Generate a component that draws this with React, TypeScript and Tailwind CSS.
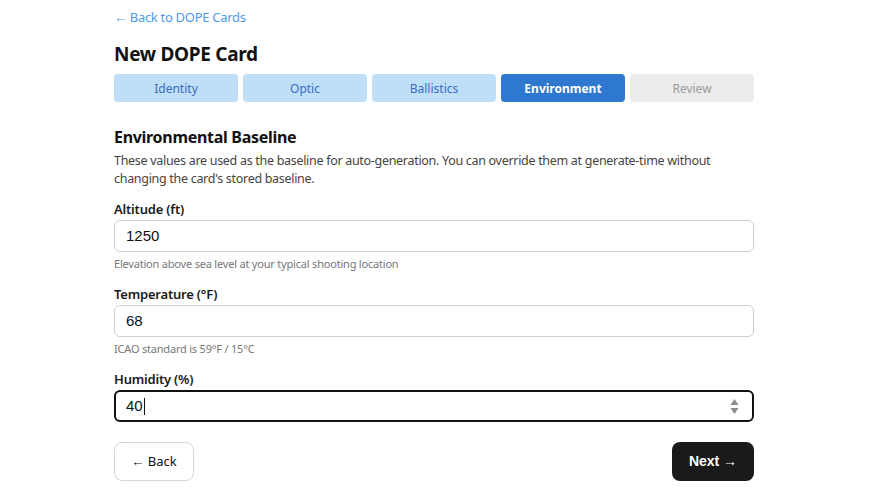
import React from "react";

const tabs = [
  { name: "Identity", state: "done" },
  { name: "Optic", state: "done" },
  { name: "Ballistics", state: "done" },
  { name: "Environment", state: "active" },
  { name: "Review", state: "todo" },
];

function Field({ label, value, hint, focused }: { label: string; value: string; hint?: string; focused?: boolean }) {
  return (
    <div className="flex flex-col">
      <label className="text-[13px] font-semibold text-[#1a1a1a] leading-[18px] mb-[2px] tracking-[-0.2px]">{label}</label>
      <div
        className={
          focused
            ? "h-[32px] rounded-[6px] border-2 border-[#111] flex items-center pl-[10px] pr-[10px]"
            : "h-[32px] rounded-[6px] border border-[#cfcfcf] flex items-center pl-[11px] pr-[10px]"
        }
      >
        <span className="text-[15px] text-[#111] font-['Liberation_Sans',Arial,sans-serif]">{value}</span>
        {focused && <span className="w-[1px] h-[17px] bg-[#111] ml-[1px]" />}
        {focused && (
          <svg className="ml-auto mr-[3px]" width="9" height="17" viewBox="0 0 9 17">
            <path d="M4.5 1 L8.5 7 L0.5 7 Z" fill="#8a8a8a" />
            <path d="M4.5 16 L8.5 10 L0.5 10 Z" fill="#8a8a8a" />
          </svg>
        )}
      </div>
      {hint && <p className="text-[11px] text-[#777] leading-[14px] mt-[5px] tracking-[-0.2px]">{hint}</p>}
    </div>
  );
}

export default function App() {
  return (
    <div className="min-h-[490px] bg-white font-['Noto_Sans',sans-serif]">
      <div className="w-[640px] ml-[114px] pt-[8px]">
        <a className="text-[13px] text-[#4d9be8] leading-[18px] block tracking-[-0.3px]">← Back to DOPE Cards</a>
        <h1 className="text-[19px] font-bold text-[#111] leading-[26px] mt-[15px] tracking-[-0.3px]">New DOPE Card</h1>
        <div className="grid grid-cols-5 gap-[5px] mt-[7px]">
          {tabs.map((t) => (
            <div
              key={t.name}
              className={
                t.state === "active"
                  ? "h-[28px] pt-[1px] rounded-[4px] bg-[#2f78cf] text-white font-bold text-[12px] flex items-center justify-center"
                  : t.state === "done"
                  ? "h-[28px] pt-[1px] rounded-[4px] bg-[#bfdff8] text-[#3a6dbd] text-[12px] flex items-center justify-center"
                  : "h-[28px] pt-[1px] rounded-[4px] bg-[#ececec] text-[#9a9a9a] text-[12px] flex items-center justify-center"
              }
            >
              {t.name}
            </div>
          ))}
        </div>
        <h2 className="text-[16px] font-bold text-[#111] leading-[22px] mt-[24px] tracking-[-0.3px]">Environmental Baseline</h2>
        <p className="text-[12.5px] text-[#444] leading-[18px] mt-[4px] tracking-[-0.3px]">
          These values are used as the baseline for auto-generation. You can override them at generate-time without changing the card's stored baseline.
        </p>
        <div className="flex flex-col gap-[14px] mt-[12px]">
          <Field label="Altitude (ft)" value="1250" hint="Elevation above sea level at your typical shooting location" />
          <Field label="Temperature (°F)" value="68" hint="ICAO standard is 59°F / 15°C" />
          <Field label="Humidity (%)" value="40" focused />
        </div>
        <div className="flex justify-between mt-[20px]">
          <button className="h-[39px] w-[80px] rounded-[8px] border border-[#d6d6d6] bg-white text-[13px] text-[#111]">← Back</button>
          <button className="h-[39px] w-[82px] rounded-[8px] bg-[#1a1a1a] text-white text-[14px] font-bold font-['Liberation_Sans',Arial,sans-serif]">Next →</button>
        </div>
      </div>
    </div>
  );
}
